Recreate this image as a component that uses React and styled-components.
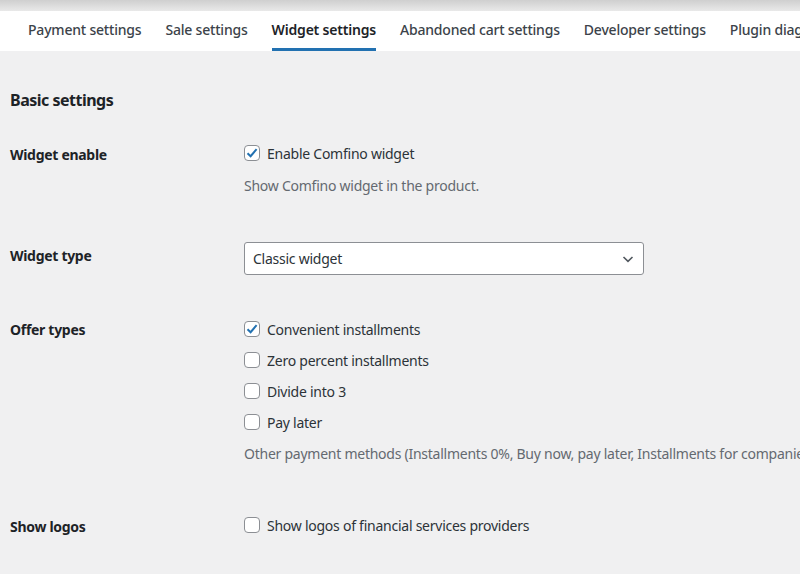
import styled, { createGlobalStyle } from "styled-components";

const GlobalStyle = createGlobalStyle`
  body {
    margin: 0;
    background: #f0f0f1;
    font-family: "Noto Sans", "Open Sans", sans-serif;
    color: #1d2327;
    overflow: hidden;
  }
`;

const Page = styled.div`
  width: 800px;
  height: 574px;
  overflow: hidden;
`;

const TopStrip = styled.div`
  height: 11px;
  background: linear-gradient(#cfcfcf, #e9e9e9);
`;

const TabBar = styled.nav`
  display: flex;
  gap: 24px;
  background: #fff;
  height: 40px;
  padding-left: 28px;
  white-space: nowrap;
`;

const Tab = styled.a`
  display: flex;
  align-items: center;
  font-size: 14px;
  font-weight: ${(p) => (p.$active ? 600 : 500)};
  color: ${(p) => (p.$active ? "#1d2327" : "#3c434a")};
  border-bottom: 3px solid ${(p) => (p.$active ? "#2271b1" : "transparent")};
  letter-spacing: -0.2px;
  text-decoration: none;
`;

const Content = styled.div`
  padding: 38px 10px 0;
`;

const SectionTitle = styled.h2`
  margin: 0 0 32px;
  font-size: 16px;
  font-weight: 700;
  letter-spacing: -0.5px;
`;

const Row = styled.div`
  display: grid;
  grid-template-columns: 234px 1fr;
  padding-bottom: ${(p) => p.$gap || 0}px;
`;

const Label = styled.div`
  font-size: 14px;
  font-weight: 700;
  letter-spacing: -0.3px;
  line-height: 20px;
  padding-top: ${(p) => p.$top || 0}px;
`;

const Field = styled.div`
  display: flex;
  flex-direction: column;
`;

const CheckLine = styled.label`
  display: flex;
  align-items: center;
  gap: 7px;
  height: 20px;
  font-size: 14px;
  letter-spacing: -0.25px;
  color: #2c3338;
  margin-bottom: 11px;
`;

const Box = styled.span`
  width: 16px;
  height: 16px;
  box-sizing: border-box;
  border: 1px solid #8c8f94;
  border-radius: 4px;
  background: #fff;
  display: flex;
  align-items: center;
  justify-content: center;
`;

const Hint = styled.p`
  margin: ${(p) => p.$top ?? 2}px 0 0;
  font-size: 14px;
  letter-spacing: -0.25px;
  line-height: 20px;
  color: #646970;
  white-space: nowrap;
`;

const Select = styled.div`
  width: 400px;
  height: 33px;
  box-sizing: border-box;
  border: 1px solid #8c8f94;
  border-radius: 3px;
  background: #fff;
  display: flex;
  align-items: center;
  justify-content: space-between;
  padding: 0 8px;
  font-size: 14px;
  letter-spacing: -0.25px;
  color: #2c3338;
`;

const Check = () => (
  <svg width="14" height="14" viewBox="0 0 14 14">
    <path d="M2.5 7.2 L5.6 10.2 L11.6 3.2" fill="none" stroke="#2271b1" strokeWidth="2" />
  </svg>
);

const Chevron = () => (
  <svg width="14" height="14" viewBox="0 0 14 14">
    <path d="M2.5 5 L7 9.3 L11.5 5" fill="none" stroke="#50575e" strokeWidth="1.6" />
  </svg>
);

function Checkbox({ checked, children }) {
  return (
    <CheckLine>
      <Box>{checked && <Check />}</Box>
      {children}
    </CheckLine>
  );
}

const tabs = [
  "Payment settings",
  "Sale settings",
  "Widget settings",
  "Abandoned cart settings",
  "Developer settings",
  "Plugin diagnostics",
];

export default function App() {
  return (
    <Page>
      <GlobalStyle />
      <TopStrip />
      <TabBar>
        {tabs.map((t) => (
          <Tab key={t} $active={t === "Widget settings"}>
            {t}
          </Tab>
        ))}
      </TabBar>
      <Content>
        <SectionTitle>Basic settings</SectionTitle>
        <Row $gap={46}>
          <Label $top={2}>Widget enable</Label>
          <Field>
            <Checkbox checked>Enable Comfino widget</Checkbox>
            <Hint>Show Comfino widget in the product.</Hint>
          </Field>
        </Row>
        <Row $gap={44}>
          <Label $top={4}>Widget type</Label>
          <Field>
            <Select>
              Classic widget
              <Chevron />
            </Select>
          </Field>
        </Row>
        <Row $gap={51}>
          <Label $top={1}>Offer types</Label>
          <Field>
            <Checkbox checked>Convenient installments</Checkbox>
            <Checkbox>Zero percent installments</Checkbox>
            <Checkbox>Divide into 3</Checkbox>
            <Checkbox>Pay later</Checkbox>
            <Hint $top={1}>
              Other payment methods (Installments 0%, Buy now, pay later, Installments for companies)
            </Hint>
          </Field>
        </Row>
        <Row>
          <Label $top={2}>Show logos</Label>
          <Field>
            <Checkbox>Show logos of financial services providers</Checkbox>
          </Field>
        </Row>
      </Content>
    </Page>
  );
}
